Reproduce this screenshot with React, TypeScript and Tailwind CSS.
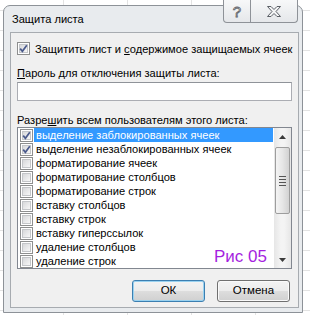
const items = [
  { label: "выделение заблокированных ячеек", checked: true, selected: true },
  { label: "выделение незаблокированных ячеек", checked: true },
  { label: "форматирование ячеек" },
  { label: "форматирование столбцов" },
  { label: "форматирование строк" },
  { label: "вставку столбцов" },
  { label: "вставку строк" },
  { label: "вставку гиперссылок" },
  { label: "удаление столбцов" },
  { label: "удаление строк" },
];

const CheckBox = ({ checked = false }: { checked?: boolean }) => (
  <span className="flex h-[13px] w-[13px] shrink-0 border border-[#8e8f8f] bg-white p-[1px]">
    <span className="relative flex-1 border border-[#c4c6c9] bg-[linear-gradient(135deg,#d7d8da,#f7f7f7)]">
      {checked && (
        <svg className="absolute -left-[2px] -top-[2px]" width="11" height="11" viewBox="0 0 11 11">
          <path d="M2.2 5.6 L4.4 8.3 L8.8 2.2" fill="none" stroke="#4a5a8c" strokeWidth="1.7" />
        </svg>
      )}
    </span>
  </span>
);

const Button = ({ children, focused = false }: { children: React.ReactNode; focused?: boolean }) => (
  <div
    className={`flex h-[22px] w-[73px] items-center justify-center rounded-[3px] border bg-[linear-gradient(to_bottom,#f3f3f3_0%,#ececec_48%,#dddddd_52%,#d0d0d0_100%)] text-[11.5px] text-black ${
      focused ? "border-[#3c7fb1] shadow-[inset_0_0_0_1px_#9ad2f0]" : "border-[#707070] shadow-[inset_0_0_0_1px_#fafafa]"
    }`}
  >
    {children}
  </div>
);

export default function App() {
  return (
    <div className="relative h-[315px] w-[310px] overflow-hidden bg-white bg-[linear-gradient(to_right,#e3e3e3_1px,transparent_1px),linear-gradient(to_bottom,#e3e3e3_1px,transparent_1px)] bg-[size:64px_20px] bg-[position:63px_10px] font-['Liberation_Sans',Arial,sans-serif] text-[11.1px] text-black">
      <div className="pl-[3px] pt-[5px]">
        <div className="flex h-[308px] w-[300px] flex-col rounded-t-[7px] border border-[#8d9298] bg-[#e8ebee]">
          <div className="flex h-[26px] shrink-0 items-center pl-[8px] leading-[14px]">Защита листа</div>
          <div className="ml-[6px] flex h-[276px] w-[289px] flex-col border border-[#a7abb0] bg-[#f0f0f0]">
            <div className="mt-[9px] flex h-[13px] items-center gap-[5px] whitespace-nowrap pl-[6px] leading-[14px]">
              <CheckBox checked />
              <span>
                Защитить лист и <u>с</u>одержимое защищаемых ячеек
              </span>
            </div>
            <div className="mt-[11px] pl-[6px] leading-[14px]">
              <u>П</u>ароль для отключения защиты листа:
            </div>
            <div className="ml-[6px] mt-[2px] h-[19px] w-[275px] border border-[#abadb3] border-t-[#8f9399] bg-white" />
            <div className="mt-[12px] pl-[6px] leading-[14px]">
              Разре<u>ш</u>ить всем пользователям этого листа:
            </div>
            <div className="relative ml-[6px] flex h-[142px] w-[275px] border border-[#828790] bg-white">
              <div className="flex flex-1 flex-col">
                {items.map((it) => (
                  <div key={it.label} className="flex h-[14px] items-center leading-[14px]">
                    <span className="ml-[2px] mr-[1px]">
                      <CheckBox checked={it.checked} />
                    </span>
                    <span
                      className={`flex h-[14px] flex-1 items-center whitespace-nowrap pl-[2px] ${
                        it.selected ? "bg-[#3399ff] text-white" : ""
                      }`}
                    >
                      {it.label}
                    </span>
                  </div>
                ))}
              </div>
              <div className="ml-[1px] flex w-[17px] flex-col bg-[linear-gradient(to_right,#e6e6e6,#f4f4f4_40%,#f4f4f4_60%,#e6e6e6)]">
                <div className="flex h-[17px] items-center justify-center">
                  <svg width="7" height="4" viewBox="0 0 7 4">
                    <path d="M0 4 L3.5 0 L7 4 Z" fill="#3b3b3b" />
                  </svg>
                </div>
                <div className="mx-[1px] mt-[2px] flex h-[67px] flex-col items-center justify-center gap-[2px] rounded-[2px] border border-[#9d9d9d] bg-[linear-gradient(to_right,#f4f4f4,#e6e6e6_50%,#d2d2d2)]">
                  <span className="h-px w-[7px] bg-[#555]" />
                  <span className="h-px w-[7px] bg-[#555]" />
                  <span className="h-px w-[7px] bg-[#555]" />
                  <span className="h-px w-[7px] bg-[#555]" />
                </div>
                <div className="flex-1" />
                <div className="flex h-[17px] items-center justify-center">
                  <svg width="7" height="4" viewBox="0 0 7 4">
                    <path d="M0 0 L3.5 4 L7 0 Z" fill="#3b3b3b" />
                  </svg>
                </div>
              </div>
              <span className="absolute left-[196px] top-[119px] text-[17px] leading-[20px] text-[#a51fe0]">Рис 05</span>
            </div>
            <div className="mt-[11px] flex justify-end gap-[12px] pr-[8px]">
              <Button focused>ОК</Button>
              <Button>Отмена</Button>
            </div>
          </div>
        </div>
      </div>
      {/* caption buttons */}
      <div className="absolute left-[223px] top-0 flex h-[23px]">
        <div className="flex w-[28px] items-center justify-center rounded-bl-[4px] border border-t-0 border-[#8e9298] bg-[linear-gradient(to_bottom,#f7f8f9,#e5e7ea)]">
          <span className="text-[15px] leading-[15px] text-transparent [-webkit-text-stroke:0.8px_#5b5f66]">?</span>
        </div>
        <div className="flex w-[47px] items-center justify-center rounded-br-[4px] border border-l-0 border-t-0 border-[#8e9298] bg-[linear-gradient(to_bottom,#f7f8f9,#e5e7ea)]">
          <svg width="16" height="13" viewBox="0 0 16 13">
            <path
              d="M1.5 1.5 H5 L8 4.5 L11 1.5 H14.5 L10 6.5 L14.5 11.5 H11 L8 8.5 L5 11.5 H1.5 L6 6.5 Z"
              fill="#f4f5f6"
              stroke="#5b5f66"
              strokeWidth="1"
            />
          </svg>
        </div>
      </div>
    </div>
  );
}
